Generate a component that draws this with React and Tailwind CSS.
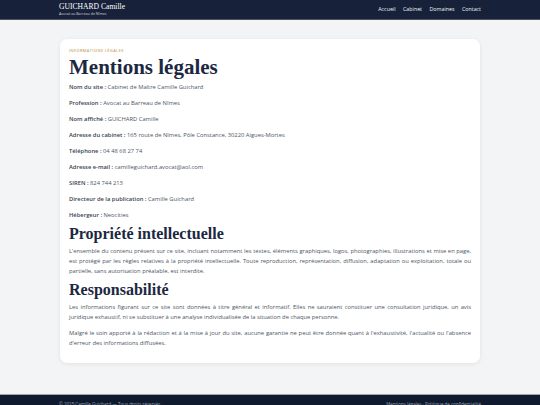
const body = { fontFamily: '"Open Sans", "Noto Sans", sans-serif' };

const INFOS = [
  ['Nom du site', 'Cabinet de Maître Camille Guichard'],
  ['Profession', 'Avocat au Barreau de Nîmes'],
  ['Nom affiché', 'GUICHARD Camille'],
  ['Adresse du cabinet', '165 route de Nîmes, Pôle Constance, 30220 Aigues-Mortes'],
  ['Téléphone', '04 48 68 27 74'],
  ['Adresse e-mail', 'camilleguichard.avocat@aol.com'],
  ['SIREN', '824 744 213'],
  ['Directeur de la publication', 'Camille Guichard'],
  ['Hébergeur', 'Neocities'],
];

function Header() {
  return (
    <header className="bg-[#17213a] border-b border-[#4b5563]">
      <div className="w-[422px] mx-auto h-[19px] flex items-center justify-between">
        <div className="leading-none">
          <div className="font-['Liberation_Serif',serif] text-[7.6px] text-white">GUICHARD Camille</div>
          <div className="text-[3.6px] text-gray-300 mt-[1px]">Avocat au Barreau de Nîmes</div>
        </div>
        <nav className="flex gap-[7.5px] text-[5.3px] text-gray-100">
          <a>Accueil</a>
          <a>Cabinet</a>
          <a>Domaines</a>
          <a>Contact</a>
        </nav>
      </div>
    </header>
  );
}

export default function App() {
  return (
    <div className="min-h-[405px] bg-[#f3f4f6] flex flex-col" style={body}>
      <Header />
      <main className="flex-1 pt-[19px] pb-[31px]">
        <div className="w-[420px] mx-auto bg-white rounded-[7px] shadow-[0_1px_4px_rgba(0,0,0,0.08)] px-[9px] pt-[9px] pb-[15px]">
          <p className="text-[3.8px] tracking-[0.12em] font-semibold text-[#c9a35e] uppercase">Informations légales</p>
          <h1 className="font-['Liberation_Serif',serif] font-bold text-[21px] leading-[22px] text-[#1c2841] mt-[2px] mb-[4px]">Mentions légales</h1>
          <div className="text-[5.8px] text-[#4b5563] leading-[10px]">
            {INFOS.map(([k, v]) => (
              <p key={k} className="mb-[6px]">
                <span className="font-semibold text-[#374151]">{k} :</span> {v}
              </p>
            ))}
          </div>
          <h2 className="font-['Liberation_Serif',serif] font-bold text-[16px] leading-[18px] text-[#1c2841] mt-[-1px] mb-[3px]">Propriété intellectuelle</h2>
          <p className="text-[5.8px] text-[#4b5563] leading-[10px] text-justify">
            L'ensemble du contenu présent sur ce site, incluant notamment les textes, éléments graphiques, logos, photographies, illustrations et mise en page, est protégé par les règles relatives à la propriété intellectuelle. Toute reproduction, représentation, diffusion, adaptation ou exploitation, totale ou partielle, sans autorisation préalable, est interdite.
          </p>
          <h2 className="font-['Liberation_Serif',serif] font-bold text-[16px] leading-[18px] text-[#1c2841] mt-[5px] mb-[3px]">Responsabilité</h2>
          <p className="text-[5.8px] text-[#4b5563] leading-[10px] text-justify mb-[6px]">
            Les informations figurant sur ce site sont données à titre général et informatif. Elles ne sauraient constituer une consultation juridique, un avis juridique exhaustif, ni se substituer à une analyse individualisée de la situation de chaque personne.
          </p>
          <p className="text-[5.8px] text-[#4b5563] leading-[10px] text-justify">
            Malgré le soin apporté à la rédaction et à la mise à jour du site, aucune garantie ne peut être donnée quant à l'exhaustivité, l'actualité ou l'absence d'erreur des informations diffusées.
          </p>
        </div>
      </main>
      <footer className="bg-[#0f1a2e] border-t border-[#9ca3af]">
        <div className="w-[422px] mx-auto flex justify-between pt-[6px] pb-[6px] text-[4.5px] text-gray-400">
          <span>© 2025 Camille Guichard — Tous droits réservés</span>
          <span>Mentions légales · Politique de confidentialité</span>
        </div>
      </footer>
    </div>
  );
}
